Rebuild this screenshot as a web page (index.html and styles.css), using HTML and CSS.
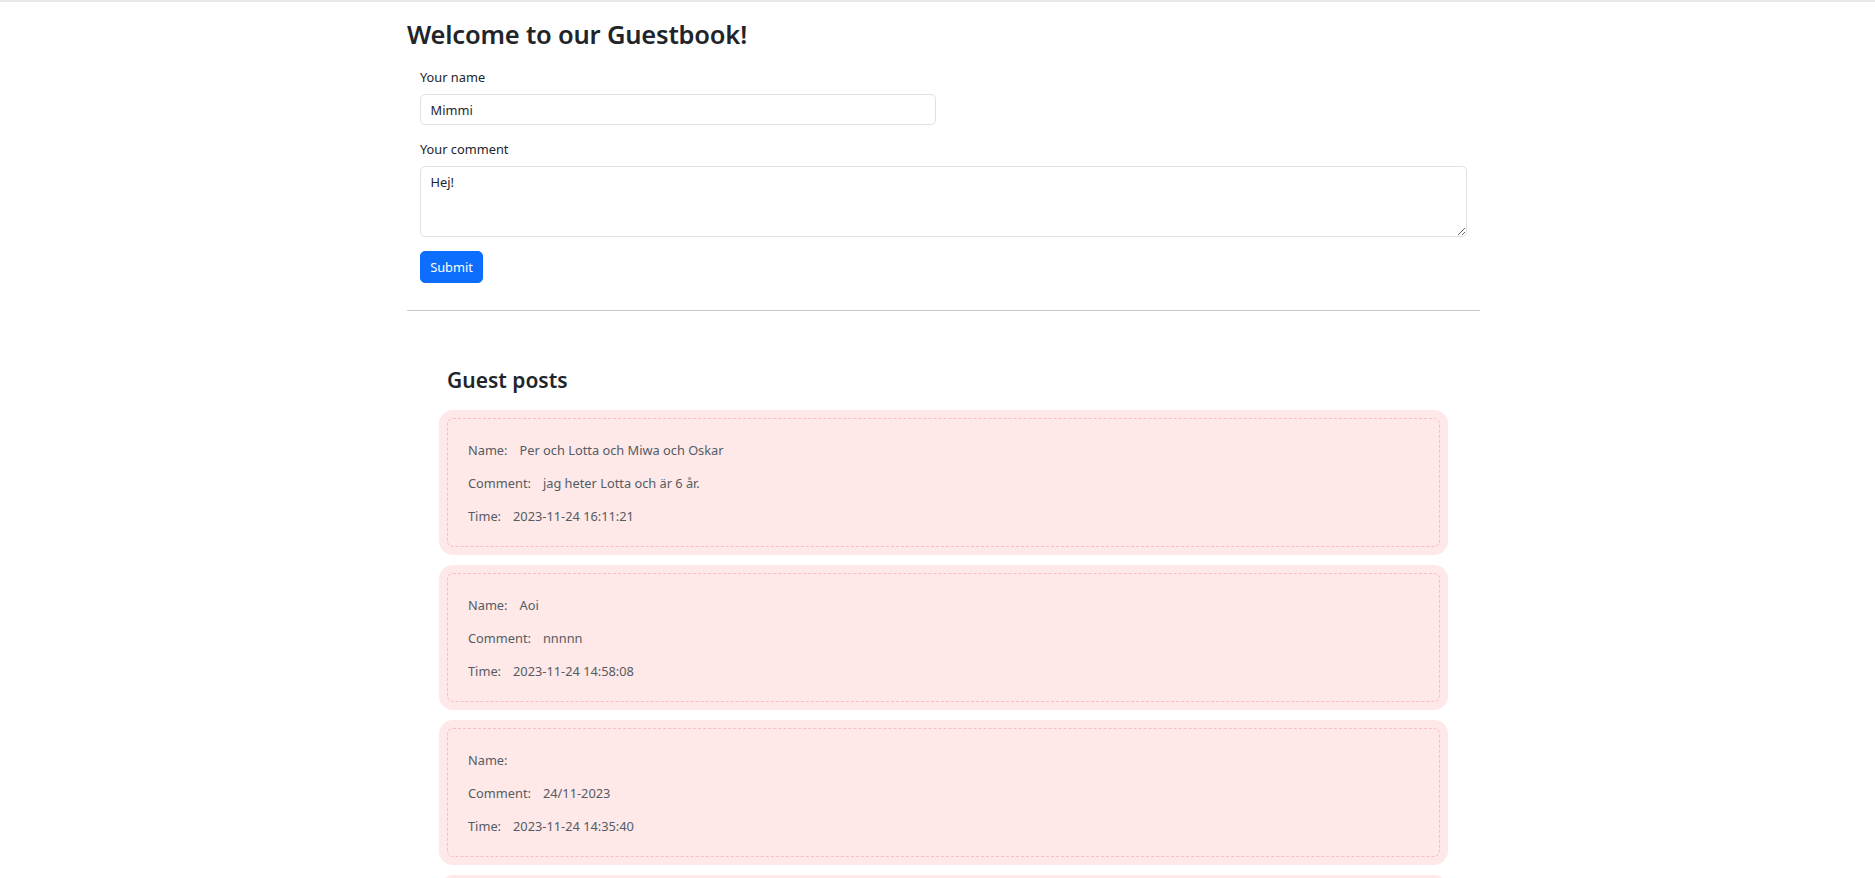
FILE: index.html
```html
<!DOCTYPE html>
<html lang="en">
<head>
<meta charset="utf-8">
<title>Guestbook</title>
<link rel="stylesheet" href="styles.css">
</head>
<body>
<div class="topline"></div>
<main class="container">
  <h1 class="title">Welcome to our Guestbook!</h1>
  <form class="gb-form">
    <label class="form-label" for="name">Your name</label>
    <input class="form-control" id="name" type="text" value="Mimmi">
    <label class="form-label label-comment" for="comment">Your comment</label>
    <textarea class="form-control textarea" id="comment">Hej!</textarea>
    <button class="btn" type="button">Submit</button>
  </form>
  <hr class="divider">
  <section class="posts">
    <h3 class="posts-title">Guest posts</h3>
    <div class="card">
      <div class="card-inner">
        <p class="row"><span class="key">Name:</span><span>Per och Lotta och Miwa och Oskar</span></p>
        <p class="row"><span class="key">Comment:</span><span>jag heter Lotta och är 6 år.</span></p>
        <p class="row"><span class="key">Time:</span><span>2023-11-24 16:11:21</span></p>
      </div>
    </div>
    <div class="card">
      <div class="card-inner">
        <p class="row"><span class="key">Name:</span><span>Aoi</span></p>
        <p class="row"><span class="key">Comment:</span><span>nnnnn</span></p>
        <p class="row"><span class="key">Time:</span><span>2023-11-24 14:58:08</span></p>
      </div>
    </div>
    <div class="card">
      <div class="card-inner">
        <p class="row"><span class="key">Name:</span><span></span></p>
        <p class="row"><span class="key">Comment:</span><span>24/11-2023</span></p>
        <p class="row"><span class="key">Time:</span><span>2023-11-24 14:35:40</span></p>
      </div>
    </div>
    <div class="card card-peek">
      <div class="card-inner card-inner-empty"></div>
    </div>
  </section>
</main>
</body>
</html>
```
FILE: styles.css
```css
html, body {
  margin: 0;
  padding: 0;
  background: #fff;
}
body {
  font-family: "Noto Sans", "Open Sans", sans-serif;
  font-size: 12.8px;
  color: #212529;
  overflow: hidden;
  height: 878px;
}
.topline {
  height: 2px;
  background: #e9e9e9;
}
.container {
  width: 1073px;
  margin-left: 407px;
}
.title {
  font-size: 25.5px;
  font-weight: 600;
  line-height: 32px;
  margin: 16px 0 18px 0;
  color: #212529;
  letter-spacing: -0.2px;
}
.gb-form {
  display: flex;
  flex-direction: column;
  align-items: flex-start;
  padding: 0 13px;
}
.form-label {
  display: block;
  line-height: 19px;
  margin-bottom: 7px;
}
.label-comment {
  margin-top: 15px;
}
.form-control {
  box-sizing: border-box;
  font-family: inherit;
  font-size: 12.8px;
  color: #212529;
  border: 1px solid #dee2e6;
  border-radius: 5px;
  padding: 5px 9.6px;
  line-height: 19px;
  background: #fff;
  outline: none;
}
#name {
  width: 516px;
  height: 31px;
}
.textarea {
  width: 100%;
  height: 71px;
  resize: vertical;
  padding-top: 6px;
}
.btn {
  margin-top: 14px;
  height: 32px;
  width: 63px;
  background: #0d6efd;
  color: #fff;
  border: 1px solid #0d6efd;
  border-radius: 5px;
  font-family: inherit;
  font-size: 12.8px;
  padding: 0;
}
.divider {
  margin: 27px 0 0 0;
  border: 0;
  border-top: 1px solid #c8c9ca;
}
.posts {
  padding: 0 32px;
}
.posts-title {
  font-size: 21px;
  font-weight: 600;
  line-height: 26px;
  margin: 56px 0 17px 8px;
}
.card {
  background: #fee8e8;
  border-radius: 14px;
  padding: 8px;
  margin-bottom: 10px;
}
.card-inner {
  border: 1px dashed #f8bcc4;
  border-radius: 6px;
  padding: 21px 20px 7px 20px;
  color: #555c63;
}
.card-inner-empty {
  height: 100px;
}
.row {
  margin: 0 0 13px 0;
  line-height: 20px;
  display: flex;
}
.key {
  margin-right: 12px;
}
```
